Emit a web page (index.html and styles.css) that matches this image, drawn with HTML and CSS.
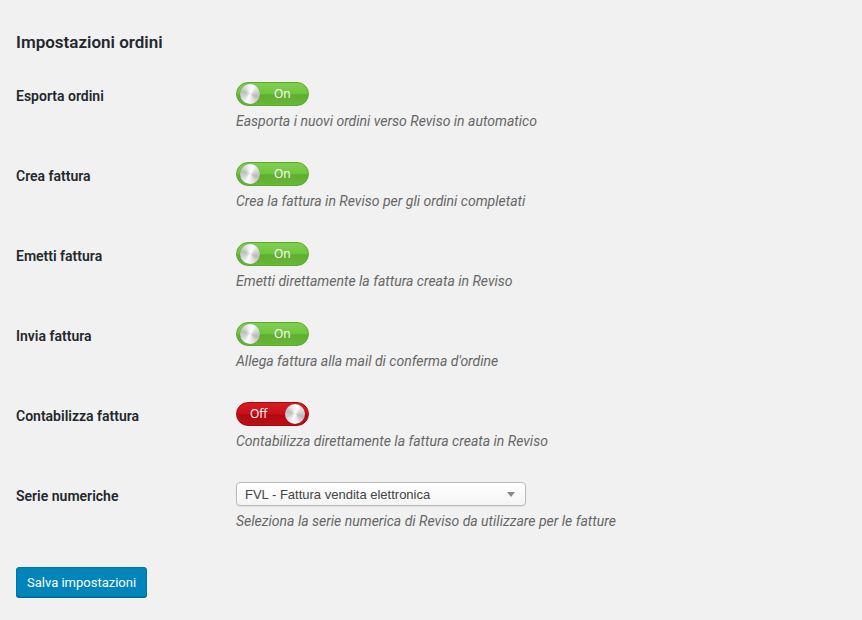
FILE: index.html
```html
<!DOCTYPE html>
<html lang="it">
<head>
<meta charset="utf-8">
<link rel="stylesheet" href="styles.css">
</head>
<body>
<div class="wrap">
  <h2 class="title">Impostazioni ordini</h2>
  <div class="form">
    <div class="row">
      <div class="label">Esporta ordini</div>
      <div class="field">
        <span class="toggle on"><span class="knob"></span><span class="txt">On</span></span>
        <p class="desc">Easporta i nuovi ordini verso Reviso in automatico</p>
      </div>
    </div>
    <div class="row">
      <div class="label">Crea fattura</div>
      <div class="field">
        <span class="toggle on"><span class="knob"></span><span class="txt">On</span></span>
        <p class="desc">Crea la fattura in Reviso per gli ordini completati</p>
      </div>
    </div>
    <div class="row">
      <div class="label">Emetti fattura</div>
      <div class="field">
        <span class="toggle on"><span class="knob"></span><span class="txt">On</span></span>
        <p class="desc">Emetti direttamente la fattura creata in Reviso</p>
      </div>
    </div>
    <div class="row">
      <div class="label">Invia fattura</div>
      <div class="field">
        <span class="toggle on"><span class="knob"></span><span class="txt">On</span></span>
        <p class="desc">Allega fattura alla mail di conferma d'ordine</p>
      </div>
    </div>
    <div class="row">
      <div class="label">Contabilizza fattura</div>
      <div class="field">
        <span class="toggle off"><span class="txt">Off</span><span class="knob"></span></span>
        <p class="desc">Contabilizza direttamente la fattura creata in Reviso</p>
      </div>
    </div>
    <div class="row">
      <div class="label">Serie numeriche</div>
      <div class="field">
        <div class="select"><span>FVL - Fattura vendita elettronica</span><span class="arrow"></span></div>
        <p class="desc">Seleziona la serie numerica di Reviso da utilizzare per le fatture</p>
      </div>
    </div>
  </div>
  <button class="btn">Salva impostazioni</button>
</div>
</body>
</html>
```
FILE: styles.css
```css
html, body { margin: 0; padding: 0; }
body {
  background: #f1f1f1;
  font-family: Roboto, "Liberation Sans", sans-serif;
  color: #23282d;
  width: 862px;
  height: 620px;
  overflow: hidden;
}
.wrap { padding: 0 16px; }
.title {
  margin: 0;
  padding-top: 32px;
  font-size: 17px;
  line-height: 20px;
  font-weight: 600;
}
.form { margin-top: 30px; }
.row {
  display: flex;
  height: 80px;
}
.label {
  width: 220px;
  flex: none;
  font-size: 14px;
  font-weight: 600;
  line-height: 20px;
  padding-top: 4px;
  box-sizing: border-box;
}
.field { display: flex; flex-direction: column; align-items: flex-start; }
.toggle {
  display: flex;
  align-items: center;
  width: 73px;
  height: 24px;
  box-sizing: border-box;
  border-radius: 12px;
  padding: 0 3px;
}
.toggle.on {
  background: linear-gradient(#82cf50 0%, #70c43e 50%, #5eae30 53%, #66b836 100%);
  border: 1px solid #5aa82c;
}
.toggle.off {
  background: linear-gradient(#d81c22 0%, #c8101a 50%, #b00a12 53%, #bc0f17 100%);
  border: 1px solid #a80a10;
  justify-content: space-between;
  padding-left: 0;
}
.knob {
  width: 20px;
  height: 20px;
  border-radius: 50%;
  flex: none;
  background:
    radial-gradient(circle at 50% 50%, rgba(255,255,255,0.7) 0, rgba(255,255,255,0) 4px),
    conic-gradient(from 20deg, #fdfdfd, #d4d4d4 50deg, #b9b9b9 90deg, #e8e8e8 140deg, #fdfdfd 180deg, #d2d2d2 230deg, #bdbdbd 270deg, #ececec 320deg, #fdfdfd);
  box-shadow: 0 0 1px rgba(0,0,0,0.35);
}
.txt {
  color: #fff;
  font-size: 12px;
  line-height: 14px;
  font-family: "Open Sans", "Liberation Sans", sans-serif;
}
.toggle.on .txt { margin-left: 14px; }
.toggle.off .txt { margin-left: 13px; }
.desc {
  margin: 5px 0 0;
  font-size: 14px;
  font-style: italic;
  color: #666;
  line-height: 20px;
}
.select {
  width: 290px;
  height: 24px;
  box-sizing: border-box;
  border: 1px solid #bbb;
  border-radius: 4px;
  background: linear-gradient(#fff, #f4f4f4);
  box-shadow: 0 1px 1px rgba(0,0,0,0.08);
  display: flex;
  align-items: center;
  justify-content: space-between;
  padding: 0 10px 0 8px;
  font-family: "Liberation Sans", Arial, sans-serif;
  font-size: 13px;
  color: #444;
}
.arrow {
  width: 0; height: 0;
  border-left: 4px solid transparent;
  border-right: 4px solid transparent;
  border-top: 5px solid #888;
}
.btn {
  margin-top: 5px;
  height: 30px;
  padding: 0 10px;
  background: #0085ba;
  border: 1px solid #0073aa;
  border-radius: 3px;
  box-shadow: 0 1px 0 #006799;
  color: #fff;
  font-family: Roboto, "Liberation Sans", sans-serif;
  font-size: 13px;
  white-space: nowrap;
  width: 131px;
}
```
